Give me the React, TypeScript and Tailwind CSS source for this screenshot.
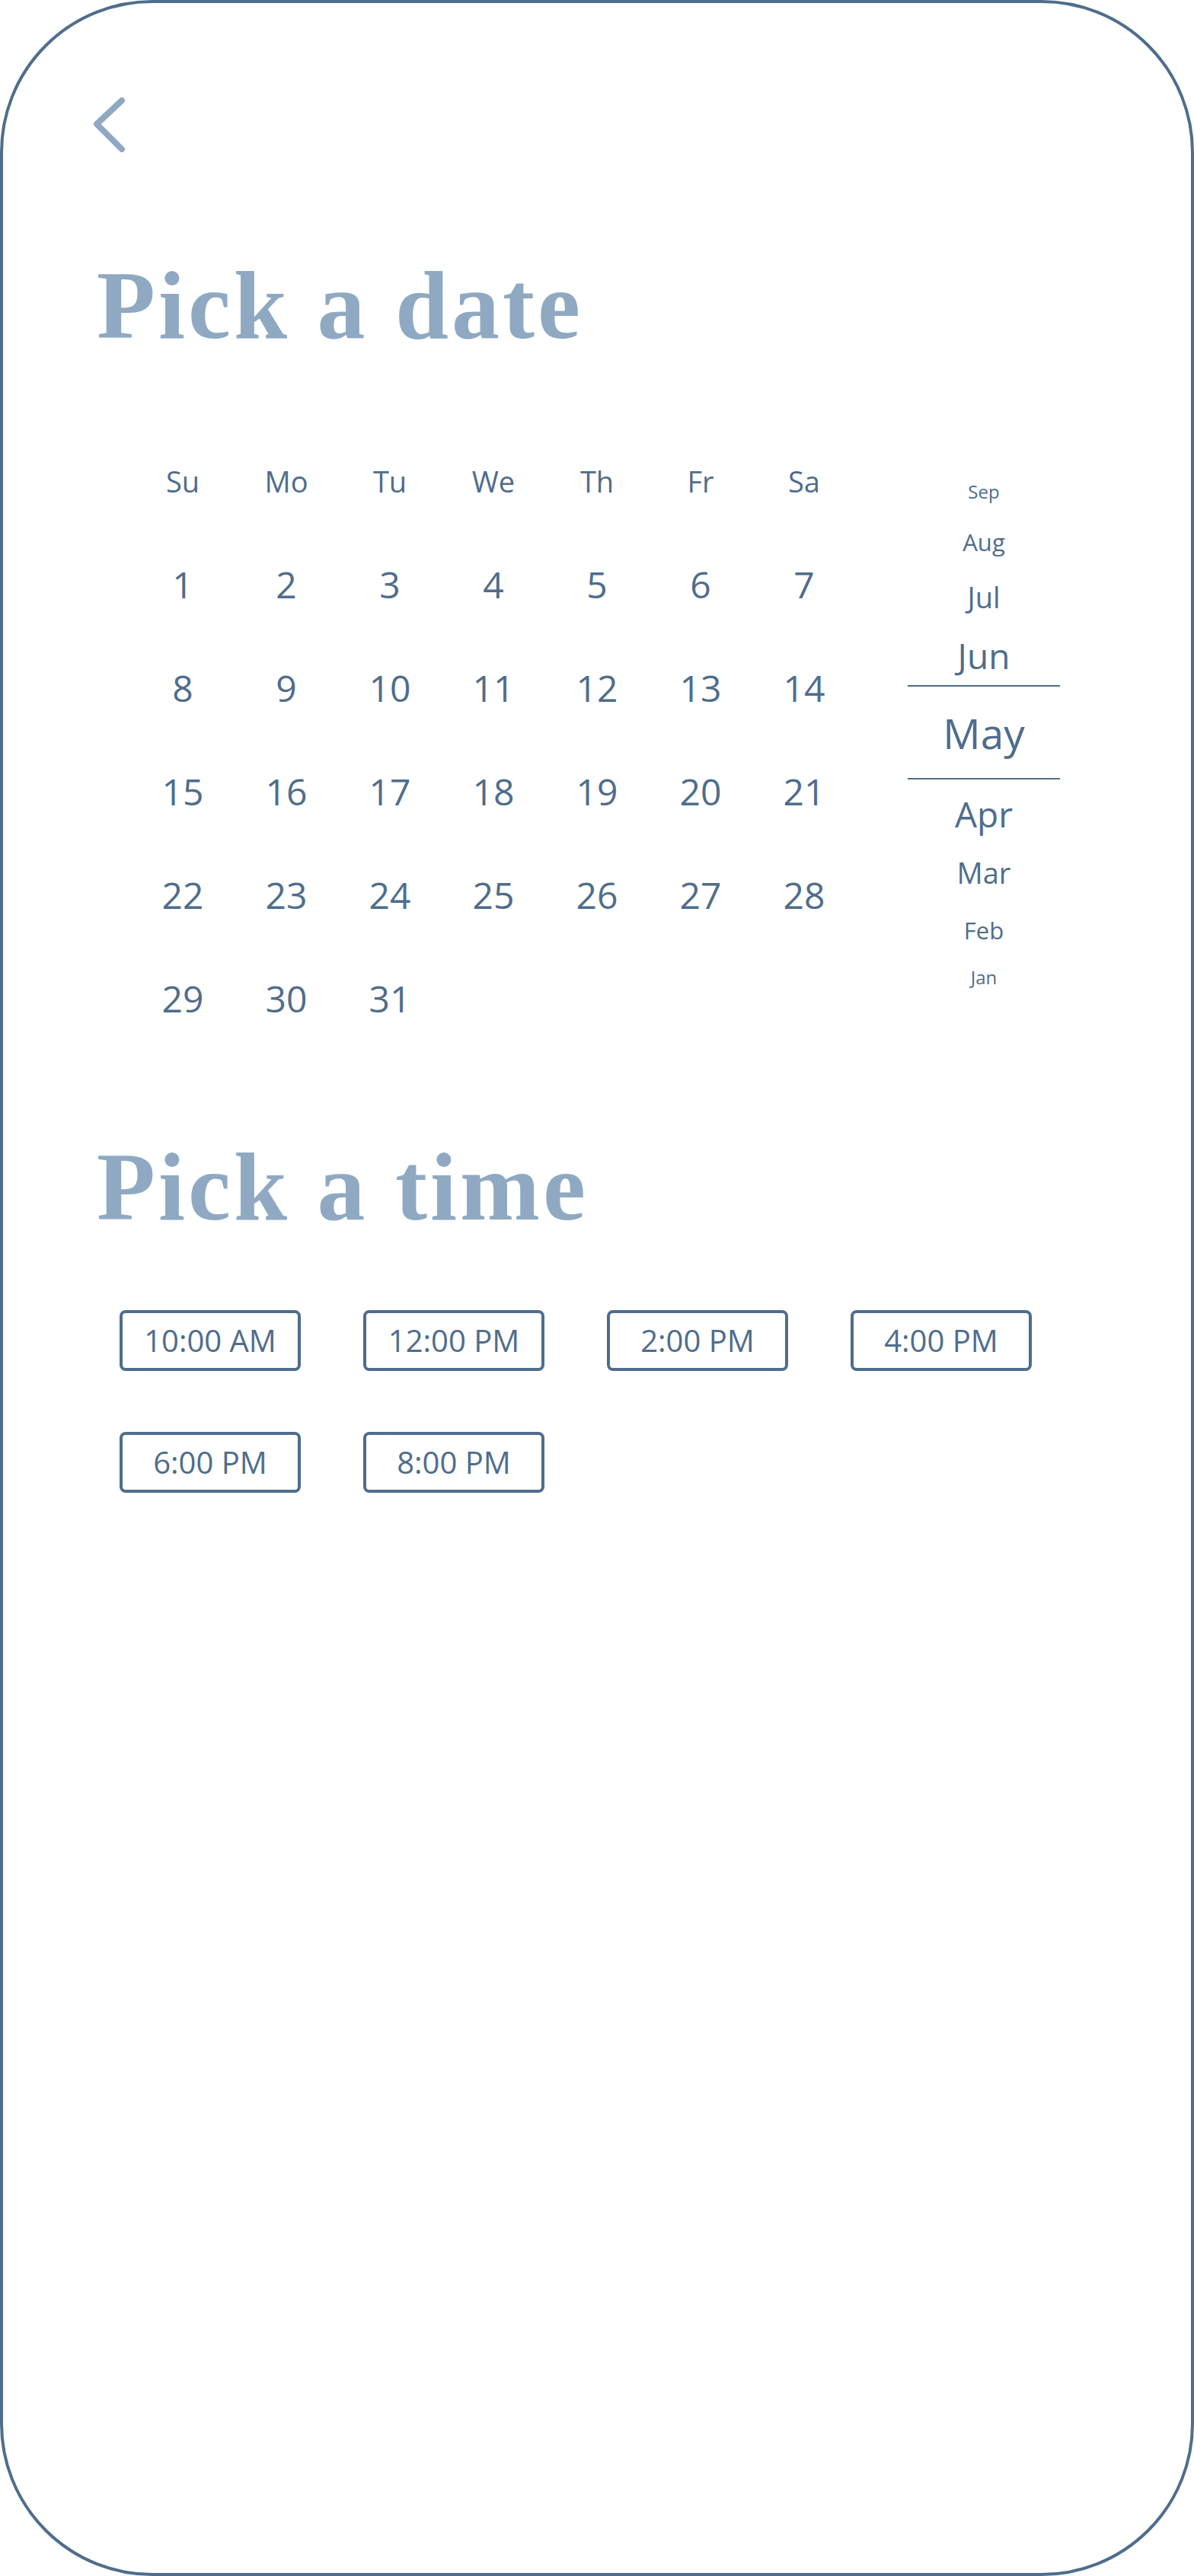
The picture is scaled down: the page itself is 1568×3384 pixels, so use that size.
import React from 'react';

const weekdays = ['Su', 'Mo', 'Tu', 'We', 'Th', 'Fr', 'Sa'];
const days = Array.from({ length: 31 }, (_, i) => i + 1);
const times = ['10:00 AM', '12:00 PM', '2:00 PM', '4:00 PM', '6:00 PM', '8:00 PM'];

// month wheel, top to bottom; selected month sits between the two rules
const monthsAbove = [
  { name: 'Sep', cls: 'h-[64px] text-[24px]' },
  { name: 'Aug', cls: 'h-[68px] text-[31px]' },
  { name: 'Jul', cls: 'h-[76px] text-[38px]' },
  { name: 'Jun', cls: 'h-[78px] text-[46px]' },
];
const monthsBelow = [
  { name: 'Apr', cls: 'h-[90px] text-[46px]' },
  { name: 'Mar', cls: 'h-[64px] text-[38px]' },
  { name: 'Feb', cls: 'h-[88px] text-[31px]' },
  { name: 'Jan', cls: 'h-[36px] text-[24px]' },
];

const sans = "font-['Open_Sans',_'Noto_Sans',_sans-serif]";
const serif = "font-['Liberation_Serif',_'DejaVu_Serif',_serif]";

export default function App() {
  return (
    <div className="w-[1568px] h-[3384px] bg-white">
      <div className="box-border w-full h-full border-4 border-[#4f6d8c] rounded-[200px] overflow-hidden">
        <div className={`pl-[116px] pt-[122px] text-[#4f6d8c] ${sans}`}>
          {/* back */}
          <svg width="48" height="76" viewBox="0 0 48 76" fill="none">
            <path d="M40 6 L7 37 L40 70" stroke="#8fa9c2" strokeWidth="8" strokeLinecap="round" strokeLinejoin="round" />
          </svg>

          <h1 className={`mt-[137px] ml-[7px] text-[126px] leading-none font-bold tracking-[4px] text-[#8fa9c2] ${serif}`}>
            Pick a date
          </h1>

          <div className="mt-[99px] flex items-start">
            <div className="ml-[52px] grid grid-cols-7 w-[952px]">
              {weekdays.map((d) => (
                <div key={d} className="h-[136px] flex items-center justify-center text-[38px]">
                  {d}
                </div>
              ))}
              {days.map((d) => (
                <div key={d} className="h-[136px] flex items-center justify-center text-[48px]">
                  {d}
                </div>
              ))}
            </div>

            <div className="ml-[68px] mt-[50px] w-[200px] flex flex-col">
              {monthsAbove.map((m) => (
                <div key={m.name} className={`${m.cls} flex items-center justify-center leading-none`}>
                  {m.name}
                </div>
              ))}
              <div className="h-[2px] bg-[#4f6d8c]" />
              <div className="h-[120px] flex items-center justify-center text-[55px] leading-none">May</div>
              <div className="h-[2px] bg-[#4f6d8c]" />
              {monthsBelow.map((m) => (
                <div key={m.name} className={`${m.cls} flex items-center justify-center leading-none`}>
                  {m.name}
                </div>
              ))}
            </div>
          </div>

          <h2 className={`mt-[117px] ml-[7px] text-[126px] leading-none font-bold tracking-[4px] text-[#8fa9c2] ${serif}`}>
            Pick a time
          </h2>

          <div className="mt-[98px] ml-[37px] grid grid-cols-[repeat(4,238px)] gap-x-[82px] gap-y-[80px]">
            {times.map((t) => (
              <button
                key={t}
                className="h-[80px] border-4 border-[#4f6d8c] rounded-[8px] flex items-center justify-center text-[40px] text-[#4f6d8c]"
              >
                {t}
              </button>
            ))}
          </div>
        </div>
      </div>
    </div>
  );
}
